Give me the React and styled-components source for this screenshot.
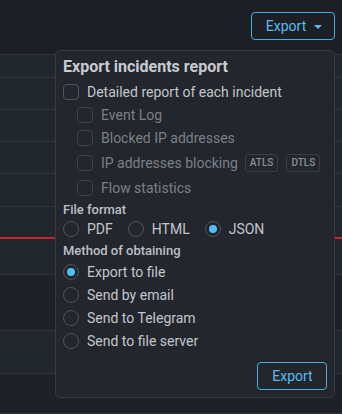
import React from "react";
import styled, { createGlobalStyle } from "styled-components";

const Global = createGlobalStyle`
  html, body { margin: 0; padding: 0; background: #1c1f26; }
  body { font-family: Roboto, "Noto Sans", "Liberation Sans", sans-serif; width: 342px; height: 414px; overflow: hidden; }
  * { box-sizing: border-box; }
`;

const Page = styled.div`
  position: relative;
  width: 342px;
  height: 414px;
  background: #1c1f26;
`;

const Header = styled.div`
  height: 54px;
  display: flex;
  justify-content: flex-end;
  align-items: flex-start;
  padding: 12px 7px 0 0;
`;

const OutlineButton = styled.button`
  height: 28px;
  padding-left: 14px;
  padding-right: ${(p) => (p.$caret ? "12px" : "13px")};
  width: ${(p) => p.$w}px;
  display: flex;
  align-items: center;
  justify-content: center;
  gap: 8px;
  background: transparent;
  border: 1px solid #4aaee0;
  border-radius: 4px;
  color: #58bdf0;
  font-family: inherit;
  font-size: 14px;
  line-height: 1;
`;

const Caret = styled.span`
  width: 0;
  height: 0;
  border-left: 4px solid transparent;
  border-right: 4px solid transparent;
  border-top: 4px solid #58bdf0;
  margin-top: 1px;
`;

const Table = styled.div`
  display: flex;
  flex-direction: column;
  border-top: 1px solid #2f333a;
`;

const Row = styled.div`
  height: ${(p) => p.$h}px;
  background: ${(p) => (p.$dark ? "#1e2128" : "#22262d")};
  border-bottom: ${(p) => (p.$alert ? "2px solid #c4262b" : "1px solid #30343b")};
`;

const Panel = styled.div`
  position: absolute;
  top: 50px;
  left: 55px;
  width: 280px;
  height: 348px;
  background: #23262d;
  border: 1px solid #363a41;
  border-radius: 5px;
  padding: 6px 7px 7px 7px;
  display: flex;
  flex-direction: column;
`;

const Title = styled.div`
  height: 20px;
  line-height: 20px;
  font-size: 16px;
  font-weight: 700;
  color: #c7cbd1;
  margin-bottom: 3px;
`;

const CheckRow = styled.label`
  display: flex;
  align-items: center;
  height: ${(p) => p.$h || 23}px;
  padding-left: ${(p) => (p.$sub ? 14 : 0)}px;
  gap: 8px;
  font-size: 14px;
  color: ${(p) => (p.$disabled ? "#7b8087" : "#c2c6cc")};
`;

const Box = styled.span`
  width: 16px;
  height: 16px;
  flex: none;
  border: 1px solid ${(p) => (p.$disabled ? "#3d4148" : "#50545b")};
  border-radius: 4px;
`;

const Badge = styled.span`
  height: 18px;
  padding: 0 4px;
  display: inline-flex;
  align-items: center;
  border: 1px solid #393d44;
  border-radius: 3px;
  font-size: 10px;
  font-weight: 500;
  color: #8a8f96;
  margin-left: ${(p) => (p.$first ? -1 : 0)}px;
`;

const Label = styled.div`
  height: 20px;
  margin-top: ${(p) => p.$mt || 0}px;
  display: flex;
  align-items: center;
  font-size: 13px;
  font-weight: 500;
  color: #bcc0c6;
`;

const RadioGroup = styled.div`
  display: flex;
  flex-direction: ${(p) => (p.$inline ? "row" : "column")};
  gap: ${(p) => (p.$inline ? "15px" : "0")};
  height: ${(p) => (p.$inline ? "19px" : "auto")};
  align-items: ${(p) => (p.$inline ? "center" : "stretch")};
`;

const RadioRow = styled.label`
  display: flex;
  align-items: center;
  gap: 8px;
  height: ${(p) => (p.$inline ? 19 : 23)}px;
  font-size: 14px;
  color: #c2c6cc;
`;

const Circle = styled.span`
  width: 16px;
  height: 16px;
  flex: none;
  border-radius: 50%;
  border: 1px solid #50545b;
  display: flex;
  align-items: center;
  justify-content: center;
  &::after {
    content: "";
    width: 8px;
    height: 8px;
    border-radius: 50%;
    background: ${(p) => (p.$on ? "#4fc0f5" : "transparent")};
  }
`;

const Footer = styled.div`
  margin-top: auto;
  display: flex;
  justify-content: flex-end;
`;

function Check({ children, sub, disabled, h }) {
  return (
    <CheckRow $sub={sub} $disabled={disabled} $h={h}>
      <Box $disabled={disabled} />
      {children}
    </CheckRow>
  );
}

function Radio({ children, on, inline }) {
  return (
    <RadioRow $inline={inline}>
      <Circle $on={on} />
      {children}
    </RadioRow>
  );
}

const rows = [
  { h: 23 }, { h: 32 }, { h: 32 }, { h: 32 }, { h: 33 },
  { h: 32, alert: true }, { h: 36 }, { h: 56, dark: true }, { h: 43 }, { h: 40, dark: true },
];

export default function App() {
  return (
    <>
      <Global />
      <Page>
        <Header>
          <OutlineButton $caret $w={84}>
            Export <Caret />
          </OutlineButton>
        </Header>
        <Table>
          {rows.map((r, i) => (
            <Row key={i} $h={r.h} $alert={r.alert} $dark={r.dark} />
          ))}
        </Table>
        <Panel>
          <Title>Export incidents report</Title>
          <Check>Detailed report of each incident</Check>
          <Check sub disabled>Event Log</Check>
          <Check sub disabled>Blocked IP addresses</Check>
          <Check sub disabled h={27}>
            IP addresses blocking
            <Badge $first>ATLS</Badge>
            <Badge>DTLS</Badge>
          </Check>
          <Check sub disabled>Flow statistics</Check>
          <Label>File format</Label>
          <RadioGroup $inline>
            <Radio inline>PDF</Radio>
            <Radio inline>HTML</Radio>
            <Radio inline on>JSON</Radio>
          </RadioGroup>
          <Label $mt={2}>Method of obtaining</Label>
          <RadioGroup>
            <Radio on>Export to file</Radio>
            <Radio>Send by email</Radio>
            <Radio>Send to Telegram</Radio>
            <Radio>Send to file server</Radio>
          </RadioGroup>
          <Footer>
            <OutlineButton $w={70}>Export</OutlineButton>
          </Footer>
        </Panel>
      </Page>
    </>
  );
}
